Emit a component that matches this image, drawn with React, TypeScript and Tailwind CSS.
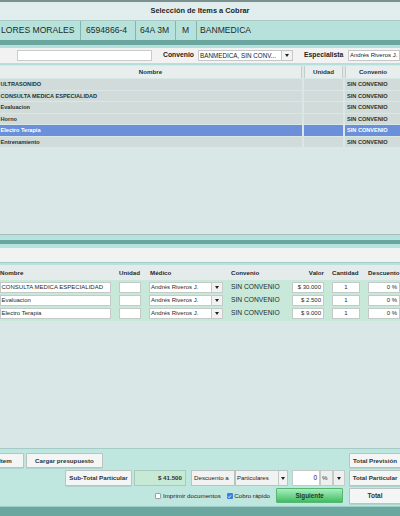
import React from "react";

function Arrow() {
  return (
    <span className="block w-0 h-0 border-l-[2.5px] border-r-[2.5px] border-t-[3px] border-l-transparent border-r-transparent border-t-[#222]" />
  );
}

function Btn({ children, className = "" }: { children: React.ReactNode; className?: string }) {
  return (
    <div
      className={
        "flex items-center justify-center bg-[#f4f5f5] border border-[#b9c4c2] rounded-[1px] shadow-[0_0.5px_0.5px_rgba(0,0,0,0.15)] text-[6.2px] font-bold text-[#2b3332] whitespace-nowrap overflow-hidden " +
        className
      }
    >
      {children}
    </div>
  );
}

const upperRows = [
  "ULTRASONIDO",
  "CONSULTA MEDICA ESPECIALIDAD",
  "Evaluacion",
  "Horno",
  "Electro Terapia",
  "Entrenamiento",
];

const lowerRows = [
  ["CONSULTA MEDICA ESPECIALIDAD", "$ 30.000"],
  ["Evaluacion", "$ 2.500"],
  ["Electro Terapia", "$ 9.000"],
];

export default function App() {
  return (
    <div className="w-[400px] h-[516px] overflow-hidden flex flex-col bg-[#d9e7e6] font-['Liberation_Sans',Arial,Helvetica,sans-serif] text-[#1f2b2a]">
      {/* top strip */}
      <div className="h-[2px] bg-[#7b918f] shrink-0" />
      {/* title */}
      <div className="h-[19px] shrink-0 bg-[#e2eeed] border-b border-[#a9c9c4] flex items-center justify-center text-[7.4px] font-bold text-[#1c2625]">
        Selección de Items a Cobrar
      </div>
      {/* patient row */}
      <div className="h-[19px] shrink-0 bg-[#b7e2dc] flex items-stretch text-[8.6px] text-[#1d2a29] whitespace-nowrap">
        <div className="w-[81px] flex items-center pl-[1px] border-r border-[#86b4ae]">LORES MORALES</div>
        <div className="w-[55px] flex items-center pl-[5px] border-r border-[#86b4ae]">6594866-4</div>
        <div className="w-[40px] flex items-center pl-[4px] border-r border-[#86b4ae]">64A 3M</div>
        <div className="w-[21px] flex items-center pl-[6px] border-r border-[#86b4ae]">M</div>
        <div className="flex-1 flex items-center pl-[3px]">BANMEDICA</div>
      </div>
      <div className="h-[5px] shrink-0 bg-[#6aa59f]" />
      <div className="h-[3px] shrink-0 bg-[#b3e0da]" />
      {/* search row */}
      <div className="h-[15px] shrink-0 bg-[#f2f2f2] flex items-center whitespace-nowrap">
        <div className="ml-[17px] w-[135px] h-[11px] bg-white border border-[#c9cccc]" />
        <div className="ml-[10px] w-[32px] text-right text-[6.8px] font-bold text-[#222]">Convenio</div>
        <div className="ml-[4px] w-[95px] h-[11px] bg-white border border-[#c4c8c8] flex items-stretch">
          <div className="flex-1 flex items-center pl-[1px] text-[6.3px] text-[#222] overflow-hidden">BANMEDICA, SIN CONV...</div>
          <div className="w-[11px] border-l border-[#c4c8c8] bg-[#f3f3f3] flex items-center justify-center">
            <Arrow />
          </div>
        </div>
        <div className="ml-[11px] w-[40px] text-[6.8px] font-bold text-[#222]">Especialista</div>
        <div className="ml-[4px] flex-1 h-[11px] bg-white border border-[#c4c8c8] flex items-center pl-[1px] text-[6px] text-[#222] overflow-hidden">
          Andrés Riveros J.
        </div>
      </div>
      <div className="h-[2px] shrink-0 bg-[#b3e0da]" />
      {/* upper table */}
      <div className="h-[169px] shrink-0 overflow-hidden pt-[1px] flex flex-col">
        <div className="h-[12px] flex gap-[2px] bg-[#dfe8e7] text-[6.2px] font-bold text-[#26302f]">
          <div className="w-[302px] bg-[#e8eeed] border-r border-[#c3cfcd] flex items-center justify-center">Nombre</div>
          <div className="w-[39px] bg-[#e8eeed] border-x border-[#c3cfcd] flex items-center justify-center">Unidad</div>
          <div className="flex-1 bg-[#e8eeed] border-l border-[#c3cfcd] flex items-center justify-center">Convenio</div>
        </div>
        {upperRows.map((r, i) => {
          const sel = i === 4;
          const cell = sel ? "bg-[#6c8fd9] text-white" : "bg-[#d1dbda] text-[#1e3433]";
          return (
            <div key={r} className="mt-[1px] h-[10.5px] flex gap-[2px] text-[5.6px] font-bold whitespace-nowrap">
              <div className={"w-[302px] flex items-center pl-[0.5px] " + cell}>{r}</div>
              <div className={"w-[39px] " + cell} />
              <div className={"flex-1 flex items-center pl-[2px] " + cell}>SIN CONVENIO</div>
            </div>
          );
        })}
      </div>
      {/* separators */}
      <div className="h-[1px] shrink-0 bg-[#a9bcba]" />
      <div className="h-[5px] shrink-0 bg-[#b5e3dd]" />
      <div className="h-[4px] shrink-0 bg-[#6aa59f]" />
      <div className="h-[4px] shrink-0 bg-[#b5e3dd]" />
      <div className="h-[14px] shrink-0 bg-[#f1f2f2]" />
      <div className="h-[1px] shrink-0 bg-[#a7cbc6]" />
      <div className="h-[2px] shrink-0 bg-[#b5e3dd]" />
      {/* lower header */}
      <div className="h-[15px] shrink-0 bg-[#e4ebea] flex items-center text-[6.2px] font-bold text-[#1f2928] whitespace-nowrap">
        <div className="w-[119px]">Nombre</div>
        <div className="w-[31px]">Unidad</div>
        <div className="w-[81px]">Médico</div>
        <div className="w-[61px]">Convenio</div>
        <div className="w-[32px] text-right">Valor</div>
        <div className="w-[8px]" />
        <div className="w-[36px]">Cantidad</div>
        <div className="flex-1">Descuento</div>
      </div>
      {/* lower rows */}
      <div className="h-[41px] shrink-0 bg-[#c8e9da] flex flex-col pt-[2px] gap-[2px]">
        {lowerRows.map(([n, v]) => (
          <div key={n} className="h-[11px] flex items-stretch text-[6px] text-[#1f2928] whitespace-nowrap">
            <div className="w-[111px] bg-white border border-[#c3cac8] flex items-center pl-[0.5px] overflow-hidden">{n}</div>
            <div className="ml-[8px] w-[22px] bg-white border border-[#c3cac8]" />
            <div className="ml-[8px] w-[74px] bg-white border border-[#c3cac8] flex">
              <div className="flex-1 flex items-center pl-[1px]">Andrés Riveros J.</div>
              <div className="w-[11px] border-l border-[#c3cac8] bg-[#f2f2f2] flex items-center justify-center">
                <Arrow />
              </div>
            </div>
            <div className="ml-[8px] w-[61px] flex items-center text-[6.7px] text-[#1d2c2a]">SIN CONVENIO</div>
            <div className="w-[32px] bg-white border border-[#c3cac8] flex items-center justify-end pr-[2px]">{v}</div>
            <div className="ml-[8px] w-[28px] bg-white border border-[#c3cac8] flex items-center justify-center">1</div>
            <div className="ml-[8px] flex-1 bg-white border border-[#c3cac8] flex items-center justify-end pr-[2px]">0 %</div>
          </div>
        ))}
      </div>
      <div className="flex-1" />
      {/* bottom panel */}
      <div className="h-[58px] shrink-0 bg-[#bfe6df] border-t border-[#a6cbc6] flex flex-col pt-[4px] gap-[2px]">
        <div className="h-[15px] flex items-stretch">
          <Btn className="ml-[-4px] w-[28px] !justify-start pl-[2px]">Item</Btn>
          <Btn className="ml-[2px] w-[77px]">Cargar presupuesto</Btn>
          <div className="flex-1" />
          <Btn className="w-[52px] mr-[-1px]">Total Previsión</Btn>
        </div>
        <div className="h-[16px] flex items-stretch">
          <Btn className="ml-[65px] w-[67px] bg-[#f0f1f1]">Sub-Total Particular</Btn>
          <div className="ml-[2px] w-[52px] bg-[#c6ead5] border border-[#a9c9bb] flex items-center justify-end pr-[3px] text-[6.2px] font-bold text-[#2b3332]">
            $ 41.500
          </div>
          <div className="ml-[5px] w-[44px] bg-[#f1f2f2] border border-[#b9c4c2] flex items-center pl-[2px] text-[6.2px] text-[#222] whitespace-nowrap overflow-hidden">
            Descuento a
          </div>
          <div className="w-[53px] bg-[#f1f2f2] border border-[#b9c4c2] flex">
            <div className="flex-1 flex items-center pl-[1px] text-[6px] text-[#222]">Particulares</div>
            <div className="w-[9px] border-l border-[#c3cac8] flex items-center justify-center">
              <Arrow />
            </div>
          </div>
          <div className="ml-[4px] w-[28px] bg-white border border-[#c3cac8] flex items-center justify-end pr-[2px] text-[6.5px] text-[#222]">0</div>
          <div className="w-[13px] bg-[#eef0f0] border border-[#c3cac8] flex items-center pl-[1px] text-[6.2px] text-[#333]">%</div>
          <div className="w-[12px] bg-[#eef0f0] border border-[#c3cac8] flex items-center justify-center">
            <Arrow />
          </div>
          <div className="flex-1" />
          <Btn className="w-[52px] mr-[-1px]">Total Particular</Btn>
        </div>
        <div className="h-[16px] flex items-stretch">
          <div className="ml-[155px] flex items-center text-[6.2px] text-[#222] whitespace-nowrap">
            <span className="w-[6px] h-[6px] bg-white border border-[#9aa3a2] rounded-[1px]" />
            <span className="ml-[2px]">Imprimir documentos</span>
          </div>
          <div className="ml-[6px] flex items-center text-[6.2px] text-[#222] whitespace-nowrap">
            <span className="w-[6px] h-[6px] bg-[#3b7fe3] rounded-[1px] flex items-center justify-center">
              <svg viewBox="0 0 10 10" className="w-[5px] h-[5px]">
                <path d="M2 5.2 L4.2 7.4 L8 2.8" stroke="white" strokeWidth="1.6" fill="none" />
              </svg>
            </span>
            <span className="ml-[1.5px]">Cobro rápido</span>
          </div>
          <div className="ml-[6px] w-[67px] h-[15px] rounded-[1px] border border-[#56b870] bg-gradient-to-b from-[#a6efbf] to-[#3cbc62] flex items-center justify-center text-[6.3px] font-bold text-[#1d3a26]">
            Siguiente
          </div>
          <div className="flex-1" />
          <Btn className="w-[52px] mr-[-1px] text-[6.5px]">Total</Btn>
        </div>
      </div>
      <div className="h-[1px] shrink-0 bg-[#9ccfc7]" />
      <div className="h-[9px] shrink-0 bg-[#6ba69f]" />
    </div>
  );
}
